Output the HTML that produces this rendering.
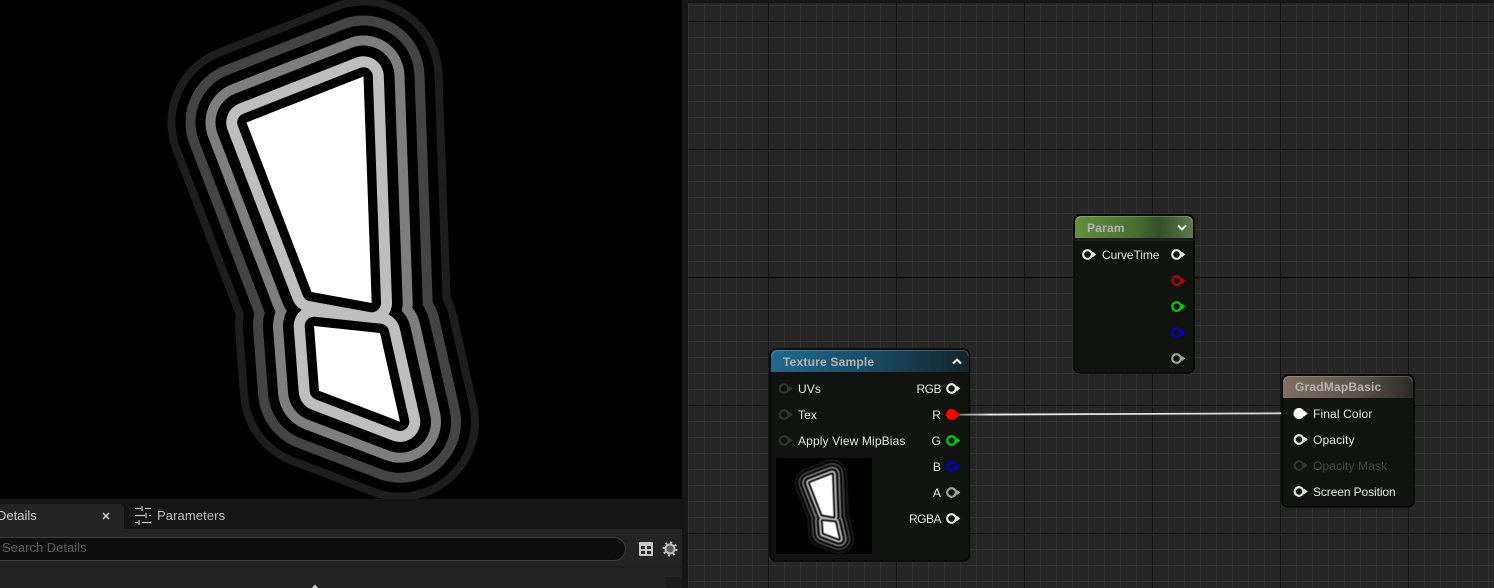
<!DOCTYPE html>
<html><head><meta charset="utf-8"><style>
html,body{margin:0;padding:0;background:#000;width:1494px;height:588px;overflow:hidden}
svg{position:absolute;left:0;top:0}
#g{position:absolute;left:682px;top:0;width:812px;height:588px;background-color:#262626;
background-repeat:repeat;
background-size:100% 588px,100% 128px,128px 100%,100% 16px,16px 100%;
background-position:0 277px,0 21px,86px 0,0 5px,6px 0;
background-image:linear-gradient(#000 1px,transparent 1px),
linear-gradient(#151515 1px,transparent 1px),
linear-gradient(90deg,#151515 1px,transparent 1px),
linear-gradient(#323232 1px,transparent 1px),
linear-gradient(90deg,#323232 1px,transparent 1px)}
#g:before{content:"";position:absolute;left:0;top:0;width:6px;height:588px;background:#161616}
#g:after{content:"";position:absolute;left:0;top:0;width:812px;height:3px;background:#181818}
text{font-family:"Liberation Sans",sans-serif;font-size:12px;letter-spacing:.13px;fill:#e6e6e6}
.h{font-weight:bold;fill:#b4b4b4;letter-spacing:.2px}
.r{text-anchor:end}
.n{letter-spacing:-.1px}
.m{letter-spacing:-.5px}
</style></head><body>
<div id="g"></div>
<svg width="1494" height="588" viewBox="0 0 1494 588" xmlns="http://www.w3.org/2000/svg">
<defs>
<path id="p" d="M363.500 76.500L246.500 122.500L311.500 292L371.700 303ZM314 326L380 333L400 421.700L319 390.700Z"/>
<g id="sh" stroke-linejoin="round" fill="#fff">
<use href="#p" stroke="#1e1e1e" stroke-width="158"/>
<use href="#p" stroke="#000" stroke-width="142"/>
<use href="#p" stroke="#444" stroke-width="122"/>
<use href="#p" stroke="#000" stroke-width="102"/>
<use href="#p" stroke="#7e7e7e" stroke-width="82"/>
<use href="#p" stroke="#000" stroke-width="62"/>
<use href="#p" stroke="#bebebe" stroke-width="40.600"/>
<use href="#p" stroke="#000" stroke-width="18.600"/>
<use href="#p" fill="#fff"/>
</g>
<linearGradient id="bl" x1="0" x2="1" y1="0" y2="0"><stop offset="0" stop-color="#1f6a8e"/><stop offset=".45" stop-color="#1a4f6a"/><stop offset="1" stop-color="#14242c"/></linearGradient>
<linearGradient id="gr" x1="0" x2="1" y1="0" y2="0"><stop offset="0" stop-color="#628f3e"/><stop offset=".5" stop-color="#4a6f32"/><stop offset=".72" stop-color="#33502a"/><stop offset="1" stop-color="#5f7a50"/></linearGradient>
<linearGradient id="br" x1="0" x2="1" y1="0" y2="0"><stop offset="0" stop-color="#806f60"/><stop offset=".6" stop-color="#5c5148"/><stop offset="1" stop-color="#2c2a28"/></linearGradient>
<linearGradient id="w" gradientUnits="userSpaceOnUse" x1="958" x2="1282" y1="0" y2="0"><stop offset="0" stop-color="#777"/><stop offset=".1" stop-color="#e8e8e8"/><stop offset="1" stop-color="#d8d8d8"/></linearGradient>
<clipPath id="c1"><rect x="0" y="0" width="682" height="499"/></clipPath>
<clipPath id="c2"><rect x="776" y="458" width="96" height="96"/></clipPath>
<g id="pin"><circle r="4.300" fill="none" stroke="currentColor" stroke-width="2.100"/><path d="M5-3L8.800 0L5 3Z" fill="currentColor"/></g>
<g id="pinf"><circle r="5.500" fill="currentColor"/><path d="M5-3L8.800 0L5 3Z" fill="currentColor"/></g>
</defs>

<!-- viewport -->
<rect width="682" height="499" fill="#000"/>
<g clip-path="url(#c1)"><use href="#sh"/></g>

<!-- details panel -->
<rect y="499" width="682" height="89" fill="#242424"/>
<rect y="499" width="682" height="30" fill="#151515"/>
<path d="M0 504H120a4 4 0 0 1 4 4V529H0Z" fill="#242424"/>
<text x="-3" y="520" style="font-size:13px;fill:#cfcfcf;letter-spacing:0">Details</text>
<path d="M103 513L109 519M109 513L103 519" stroke="#d4d4d4" stroke-width="1.500"/>
<g stroke="#c4c4c4" stroke-width="1.300" fill="none">
<path d="M135 508.500H141M145 508.500H151M142 506V511"/>
<path d="M135 515.500H145M149 515.500H151M146 513V518"/>
<path d="M135 522.500H138M142 522.500H151M139 520V525"/>
</g>
<text x="157" y="520" style="font-size:13px;fill:#c0c0c0;letter-spacing:.1px">Parameters</text>
<rect x="-14" y="537.500" width="639.500" height="23" rx="11.500" fill="#0e0e0e" stroke="#3c3c3c"/>
<text x="2" y="552" style="font-size:13px;fill:#5c5c5c;letter-spacing:0">Search Details</text>
<path d="M0 567H682" stroke="#1a1a1a" stroke-width="1"/>
<rect x="639" y="542" width="14" height="14" rx="1" fill="#c8c8c8"/>
<path d="M641 546H645V549H641ZM647 546H651V549H647ZM641 551H645V554H641ZM647 551H651V554H647Z" fill="#242424"/>
<circle cx="670" cy="549" r="4.500" fill="#5a5a5a" stroke="#bdbdbd" stroke-width="2"/>
<circle cx="670" cy="549" r="6.500" fill="none" stroke="#c8c8c8" stroke-width="2" stroke-dasharray="2 3.100"/>
<rect x="666" y="577" width="16" height="11" fill="#1c1c1c"/>
<path d="M312 588L315 584.500L318 588Z" fill="#d0d0d0"/>

<!-- Param node -->
<rect x="1074" y="215" width="120" height="158" rx="6" fill="#111311" stroke="#060606" stroke-width="1.500"/>
<path d="M1075 238V222a6 6 0 0 1 6-6H1187a6 6 0 0 1 6 6V238Z" fill="url(#gr)"/>
<path d="M1076 222a5 5 0 0 1 5-5.500H1187a5 5 0 0 1 5 5.500" fill="none" stroke="#fff" stroke-opacity=".22"/>
<rect x="1075" y="238" width="118" height="3" fill="#1c1e1b"/>
<text x="1087" y="232" class="h">Param</text>
<path d="M1178 225.500L1182 229.500L1186 225.500" fill="none" stroke="#eee" stroke-width="2"/>
<use href="#pin" x="1087.500" y="254.500" color="#e6e6e6"/>
<text x="1102" y="259" class="n">CurveTime</text>
<use href="#pin" x="1176.500" y="254.500" color="#e6e6e6"/>
<use href="#pin" x="1176.500" y="280.500" color="#c00000"/>
<use href="#pin" x="1176.500" y="306.500" color="#00d000"/>
<use href="#pin" x="1176.500" y="332.500" color="#0000d0"/>
<use href="#pin" x="1176.500" y="358.500" color="#a0a0a0"/>

<!-- Texture Sample -->
<rect x="770" y="349" width="199.500" height="212" rx="6" fill="#111311" stroke="#060606" stroke-width="1.500"/>
<path d="M771 372V356a6 6 0 0 1 6-6H963a6 6 0 0 1 6 6V372Z" fill="url(#bl)"/>
<path d="M772 356a5 5 0 0 1 5-5.500H963a5 5 0 0 1 5 5.500" fill="none" stroke="#fff" stroke-opacity=".22"/>
<text x="783" y="366" class="h">Texture Sample</text>
<path d="M953 363.500L957 359.500L961 363.500" fill="none" stroke="#eee" stroke-width="2"/>
<use href="#pin" x="784" y="388.500" color="#333"/>
<use href="#pin" x="784" y="414.500" color="#333"/>
<use href="#pin" x="784" y="440.500" color="#333"/>
<text x="798" y="393">UVs</text>
<text x="798" y="419">Tex</text>
<text x="798" y="445">Apply View MipBias</text>
<text x="941" y="393" class="r m">RGB</text>
<text x="941" y="419" class="r">R</text>
<text x="941" y="445" class="r">G</text>
<text x="941" y="471" class="r">B</text>
<text x="941" y="497" class="r">A</text>
<text x="941" y="523" class="r m">RGBA</text>
<path d="M958 414.700L1282 413.300" stroke="url(#w)" stroke-width="1.800" fill="none"/>
<use href="#pin" x="951.500" y="388.500" color="#e6e6e6"/>
<use href="#pinf" x="951.500" y="414.500" color="#ff0000"/>
<use href="#pin" x="951.500" y="440.500" color="#00d000"/>
<use href="#pin" x="951.500" y="466.500" color="#0000d0"/>
<use href="#pin" x="951.500" y="492.500" color="#a0a0a0"/>
<use href="#pin" x="951.500" y="518.500" color="#e6e6e6"/>
<rect x="776" y="458" width="96" height="96" fill="#000"/>
<g clip-path="url(#c2)"><g style="filter:blur(.5px)"><g transform="translate(763 460) scale(.19 .187)"><use href="#sh"/></g></g></g>

<!-- GradMapBasic -->
<rect x="1282" y="375" width="132" height="132" rx="6" fill="#111311" stroke="#060606" stroke-width="1.500"/>
<path d="M1283 398V382a6 6 0 0 1 6-6H1407a6 6 0 0 1 6 6V398Z" fill="url(#br)"/>
<path d="M1284 382a5 5 0 0 1 5-5.500H1407a5 5 0 0 1 5 5.500" fill="none" stroke="#fff" stroke-opacity=".2"/>
<text x="1295" y="391" class="h">GradMapBasic</text>
<use href="#pinf" x="1299" y="413.500" color="#ffffff"/>
<use href="#pin" x="1299" y="439.500" color="#e6e6e6"/>
<use href="#pin" x="1299" y="465.500" color="#333"/>
<use href="#pin" x="1299" y="491.500" color="#e6e6e6"/>
<text x="1313" y="418">Final Color</text>
<text x="1313" y="444">Opacity</text>
<text x="1313" y="470" style="fill:#454545">Opacity Mask</text>
<text x="1313" y="496" class="n">Screen Position</text>
</svg>
</body></html>
